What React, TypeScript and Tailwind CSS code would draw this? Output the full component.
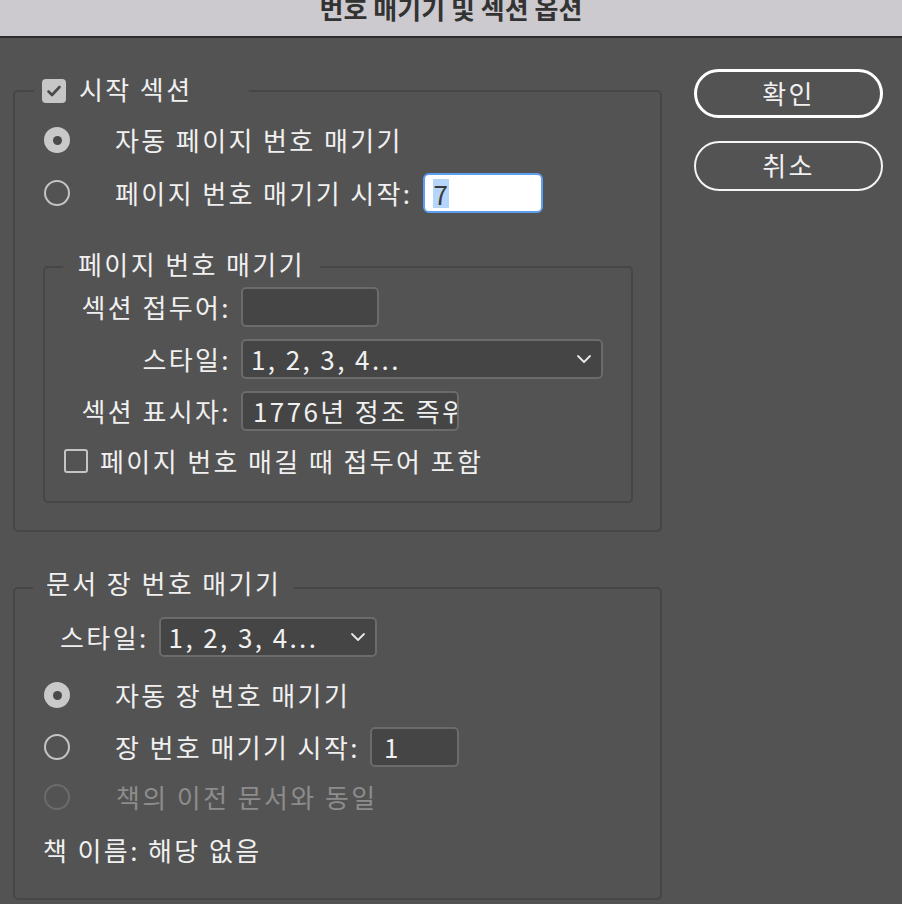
import React from "react";

function Radio({ checked, disabled }: { checked?: boolean; disabled?: boolean }) {
  if (checked) {
    return (
      <div className="w-[26px] h-[26px] rounded-full bg-[#c9c9c9] flex items-center justify-center shrink-0">
        <div className="w-[9px] h-[9px] rounded-full bg-[#4a4a4a]" />
      </div>
    );
  }
  return (
    <div
      className={
        disabled
          ? "w-[26px] h-[26px] rounded-full border-2 border-[#6b6b6b] shrink-0"
          : "w-[26px] h-[26px] rounded-full border-2 border-[#c4c4c4] shrink-0"
      }
    />
  );
}

function Chevron() {
  return (
    <svg width="16" height="10" viewBox="0 0 16 10" className="shrink-0">
      <polyline points="2,2 8,8 14,2" fill="none" stroke="#e8e8e8" strokeWidth="1.8" strokeLinecap="round" strokeLinejoin="round" />
    </svg>
  );
}

export default function App() {
  return (
    <div className="w-[902px] h-[904px] bg-[#535353] overflow-hidden text-[#f0f0f0] font-['Noto_Sans_CJK_KR','Noto_Sans',sans-serif] text-[26px] leading-[32px] tracking-[2.4px]">
      {/* title bar */}
      <div className="h-[38px] bg-[#cccacf] border-b-2 border-[#2c2c2c] flex justify-center overflow-hidden">
        <div className="text-[26px] leading-[26px] font-bold text-[#333333] -mt-[5px] tracking-[0px]">
          번호 매기기 및 섹션 옵션
        </div>
      </div>

      <div className="flex pl-[13px]">
        {/* left column */}
        <div className="w-[649px] flex flex-col">
          {/* group 1 */}
          <fieldset className="mt-[37px] border-2 border-[#464646] rounded-[5px] pl-[28px] pr-[27px] pb-[27px]">
            <legend className="-ml-[9px] pl-[8px] pr-[56px] h-[32px] flex items-center gap-[13px]">
              <div className="w-[24px] h-[24px] rounded-[4px] bg-[#c6c6c6] flex items-center justify-center">
                <svg width="16" height="14" viewBox="0 0 16 14">
                  <polyline points="2.5,7.5 6,11 13.5,3" fill="none" stroke="#4a4a4a" strokeWidth="2.6" strokeLinecap="round" strokeLinejoin="round" />
                </svg>
              </div>
              <span className="-mt-[4px]">시작 섹션</span>
            </legend>

            <div className="pt-[13px] flex flex-col gap-[13px]">
              <div className="h-[40px] flex items-center ml-[1px]">
                <Radio checked />
                <span className="ml-[45px]">자동 페이지 번호 매기기</span>
              </div>
              <div className="h-[40px] flex items-center ml-[1px]">
                <Radio />
                <span className="ml-[45px]">페이지 번호 매기기 시작:</span>
                <div className="ml-[10px] w-[120px] h-[40px] bg-white border-2 border-[#5e9ef0] rounded-[6px] flex items-center pl-[8px]">
                  <span className="bg-[#b5d5fb] text-[#3a3a3a] leading-[29px] px-[1px] tracking-[0px]">7</span>
                </div>
              </div>
            </div>

            {/* group 2 */}
            <fieldset className="mt-[38px] border-2 border-[#464646] rounded-[5px] pb-[20px]">
              <legend className="ml-[18px] px-[15px] h-[32px] flex items-center">
                <span className="-mt-[6px]">페이지 번호 매기기</span>
              </legend>
              <div className="pt-[4px] flex flex-col gap-[12px]">
                <div className="h-[40px] flex items-center gap-[10px]">
                  <div className="w-[186px] text-right">섹션 접두어:</div>
                  <div className="w-[138px] h-[40px] bg-[#454545] border-2 border-[#6b6b6b] rounded-[5px]" />
                </div>
                <div className="h-[40px] flex items-center gap-[10px]">
                  <div className="w-[186px] text-right">스타일:</div>
                  <div className="w-[362px] h-[40px] bg-[#454545] border-2 border-[#6b6b6b] rounded-[5px] flex items-center justify-between pl-[8px] pr-[9px]">
                    <span>1, 2, 3, 4...</span>
                    <Chevron />
                  </div>
                </div>
                <div className="h-[40px] flex items-center gap-[10px]">
                  <div className="w-[186px] text-right">섹션 표시자:</div>
                  <div className="w-[218px] h-[40px] bg-[#454545] border-2 border-[#6b6b6b] rounded-[5px] flex items-center pl-[10px] overflow-hidden whitespace-nowrap">
                    <span>1776년 정조 즉위</span>
                  </div>
                </div>
                <div className="h-[40px] flex items-center mt-[-2px] ml-[19px]">
                  <div className="w-[24px] h-[24px] rounded-[3px] border-2 border-[#c4c4c4] shrink-0" />
                  <span className="ml-[12px]">페이지 번호 매길 때 접두어 포함</span>
                </div>
              </div>
            </fieldset>
          </fieldset>

          {/* group 3 */}
          <fieldset className="mt-[40px] border-2 border-[#464646] rounded-[5px] pb-[28px]">
            <legend className="ml-[18px] pl-[13px] pr-[13px] h-[32px] flex items-center">
              <span className="-mt-[10px]">문서 장 번호 매기기</span>
            </legend>
            <div className="pt-[13px] flex flex-col">
              <div className="h-[40px] flex items-center pl-[45px]">
                <span>스타일:</span>
                <div className="ml-[10px] w-[218px] h-[40px] bg-[#454545] border-2 border-[#6b6b6b] rounded-[5px] flex items-center justify-between pl-[8px] pr-[9px]">
                  <span>1, 2, 3, 4...</span>
                  <Chevron />
                </div>
              </div>
              <div className="mt-[18px] h-[40px] flex items-center pl-[29px]">
                <Radio checked />
                <span className="ml-[45px]">자동 장 번호 매기기</span>
              </div>
              <div className="mt-[12px] h-[40px] flex items-center pl-[29px]">
                <Radio />
                <span className="ml-[45px]">장 번호 매기기 시작:</span>
                <div className="ml-[10px] w-[89px] h-[40px] bg-[#454545] border-2 border-[#6b6b6b] rounded-[5px] flex items-center pl-[12px]">
                  <span>1</span>
                </div>
              </div>
              <div className="mt-[10px] h-[40px] flex items-center pl-[29px]">
                <Radio disabled />
                <span className="ml-[46px] text-[#8c8c8c]">책의 이전 문서와 동일</span>
              </div>
              <div className="mt-[13px] h-[40px] flex items-center pl-[28px]">
                <span>책 이름: 해당 없음</span>
              </div>
            </div>
          </fieldset>
        </div>

        {/* buttons */}
        <div className="ml-[32px] pt-[31px] flex flex-col gap-[23px]">
          <div className="w-[189px] h-[49px] rounded-full border-[3px] border-white flex items-center justify-center">
            <span className="-mt-[2px]">확인</span>
          </div>
          <div className="w-[189px] h-[50px] rounded-full border-2 border-[#f4f4f4] flex items-center justify-center">
            <span className="-mt-[2px]">취소</span>
          </div>
        </div>
      </div>
    </div>
  );
}
